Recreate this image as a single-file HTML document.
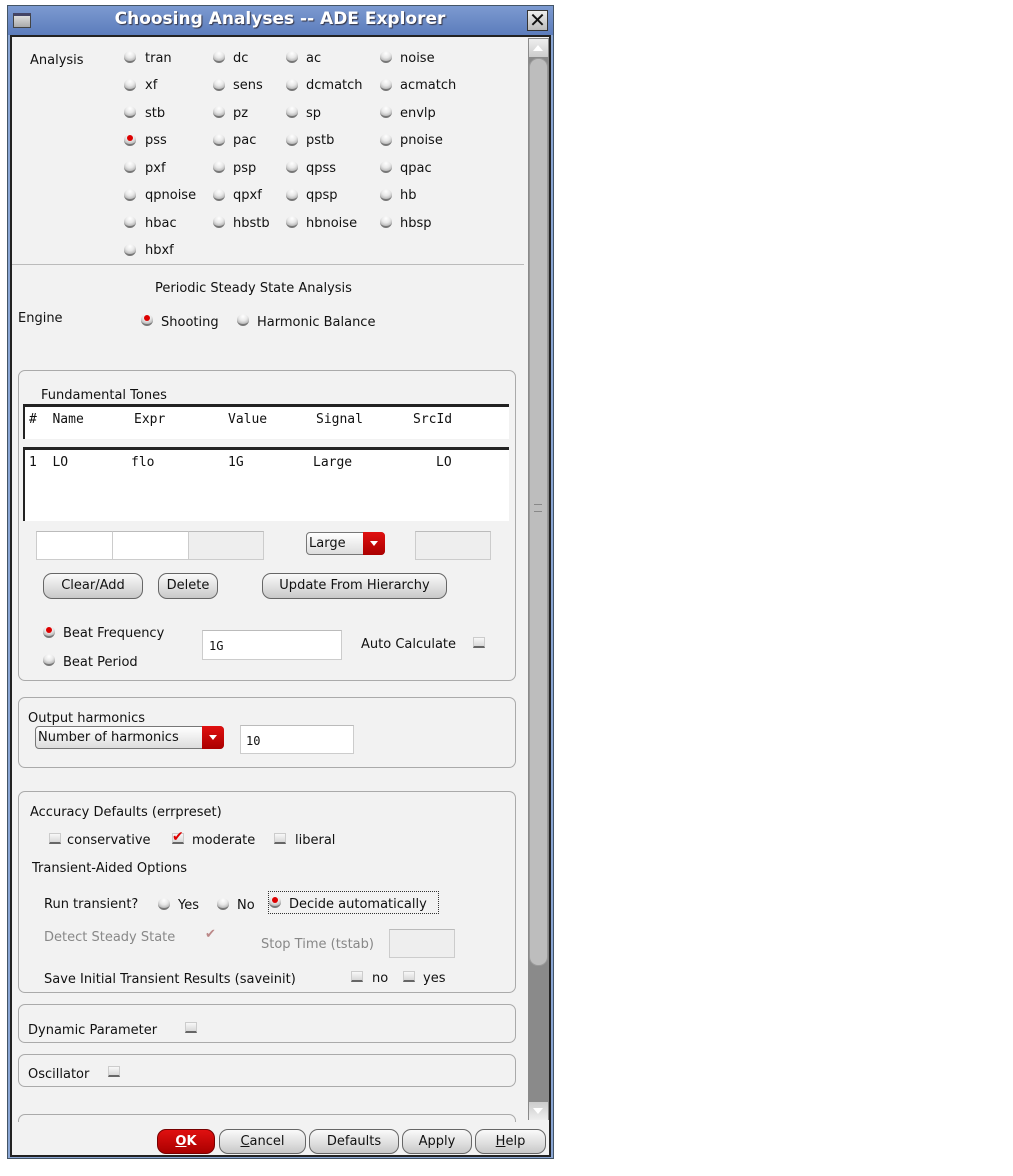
<!DOCTYPE html>
<html><head><meta charset="utf-8"><style>
*{box-sizing:border-box;margin:0;padding:0}
body{width:1013px;height:1176px;background:#fff;position:relative;overflow:hidden;font-family:"DejaVu Sans","Liberation Sans",sans-serif;font-size:13px;color:#111}
.a{position:absolute;white-space:nowrap}
.t{position:absolute;white-space:nowrap;line-height:15px;margin-top:1px}
.r{position:absolute;width:12px;height:12px;border-radius:50%;background:radial-gradient(circle at 50% 25%,#fff 0,#e8e8e8 45%,#999 100%);border-bottom:2px solid #777}
.r.on::after{content:"";position:absolute;left:3px;top:1px;width:6px;height:6px;border-radius:50%;background:#d00}
.c{position:absolute;width:12px;height:11px;background:linear-gradient(#f8f8f8,#d8d8d8);border:1px solid #ccc;border-bottom:2px solid #666}
.box{position:absolute;border:1px solid #aaa;border-radius:7px}
.btn{position:absolute;height:26px;border:1px solid #666;border-radius:9px;background:linear-gradient(#fafafa,#ddd 60%,#c8c8c8);text-align:center;line-height:24px}
.inp{position:absolute;background:#fff;border:1px solid #ccc;border-top-color:#bbb}
.g{color:#888}
.m{font-family:"DejaVu Sans Mono","Liberation Mono",monospace;font-size:13px}
.dd{position:absolute;height:23px;border:1px solid #777;border-radius:4px;background:linear-gradient(#fff,#ddd);line-height:21px;padding-left:2px}
.dd i{position:absolute;right:-1px;top:-1px;width:22px;height:23px;background:linear-gradient(#e01010,#a00);border-radius:0 4px 4px 0}
.dd i::after{content:"";position:absolute;left:7px;top:9px;border:4px solid transparent;border-top:5px solid #fff}
</style></head><body>
<div class="a" style="left:7px;top:5px;width:547px;height:1154px;background:#8aa6d4;border:1px solid #456"></div>
<div class="a" style="left:8px;top:6px;width:545px;height:29px;background:linear-gradient(#7c9ad0,#5c7dbc)"></div>
<div class="a" style="left:13px;top:13px;width:18px;height:15px;background:linear-gradient(#ddd,#aaa);border:1px solid #444;border-top:3px solid #446"></div>
<div class="a" style="left:0;top:9px;width:560px;text-align:center;color:#fff;font-weight:bold;font-size:17px;text-shadow:1px 1px 1px #334">Choosing Analyses -- ADE Explorer</div>
<div class="a" style="left:527px;top:10px;width:21px;height:21px;background:linear-gradient(#eee,#bbb);border:1px solid #333;font-size:20px;line-height:19px;text-align:center;color:#111">✕</div>
<div class="a" style="left:10px;top:35px;width:541px;height:1122px;background:#f2f2f2;border:2px solid #222"></div>
<div class="a" style="left:528px;top:38px;width:21px;height:1082px;background:#8a8a8a"></div>
<div class="a" style="left:529px;top:39px;width:19px;height:18px;background:linear-gradient(#eee,#ccc)"></div>
<div class="a" style="left:533px;top:45px;border:5px solid transparent;border-bottom:6px solid #fff;border-top:0"></div>
<div class="a" style="left:529px;top:58px;width:19px;height:908px;background:#bdbdbd;border-radius:9px;border:1px solid #999"></div>
<div class="a" style="left:534px;top:504px;width:8px;height:8px;border-top:1px solid #888;border-bottom:1px solid #888"></div>
<div class="a" style="left:529px;top:1102px;width:19px;height:18px;background:linear-gradient(#ccc,#eee)"></div>
<div class="a" style="left:533px;top:1108px;border:5px solid transparent;border-top:6px solid #fff;border-bottom:0"></div>

<div class="t" style="left:30px;top:52px">Analysis</div>
<div class="r" style="left:124px;top:51px"></div><div class="t" style="left:145px;top:50px">tran</div>
<div class="r" style="left:213px;top:51px"></div><div class="t" style="left:233px;top:50px">dc</div>
<div class="r" style="left:286px;top:51px"></div><div class="t" style="left:306px;top:50px">ac</div>
<div class="r" style="left:380px;top:51px"></div><div class="t" style="left:400px;top:50px">noise</div>
<div class="r" style="left:124px;top:79px"></div><div class="t" style="left:145px;top:77px">xf</div>
<div class="r" style="left:213px;top:79px"></div><div class="t" style="left:233px;top:77px">sens</div>
<div class="r" style="left:286px;top:79px"></div><div class="t" style="left:306px;top:77px">dcmatch</div>
<div class="r" style="left:380px;top:79px"></div><div class="t" style="left:400px;top:77px">acmatch</div>
<div class="r" style="left:124px;top:106px"></div><div class="t" style="left:145px;top:105px">stb</div>
<div class="r" style="left:213px;top:106px"></div><div class="t" style="left:233px;top:105px">pz</div>
<div class="r" style="left:286px;top:106px"></div><div class="t" style="left:306px;top:105px">sp</div>
<div class="r" style="left:380px;top:106px"></div><div class="t" style="left:400px;top:105px">envlp</div>
<div class="r on" style="left:124px;top:134px"></div><div class="t" style="left:145px;top:132px">pss</div>
<div class="r" style="left:213px;top:134px"></div><div class="t" style="left:233px;top:132px">pac</div>
<div class="r" style="left:286px;top:134px"></div><div class="t" style="left:306px;top:132px">pstb</div>
<div class="r" style="left:380px;top:134px"></div><div class="t" style="left:400px;top:132px">pnoise</div>
<div class="r" style="left:124px;top:161px"></div><div class="t" style="left:145px;top:160px">pxf</div>
<div class="r" style="left:213px;top:161px"></div><div class="t" style="left:233px;top:160px">psp</div>
<div class="r" style="left:286px;top:161px"></div><div class="t" style="left:306px;top:160px">qpss</div>
<div class="r" style="left:380px;top:161px"></div><div class="t" style="left:400px;top:160px">qpac</div>
<div class="r" style="left:124px;top:189px"></div><div class="t" style="left:145px;top:187px">qpnoise</div>
<div class="r" style="left:213px;top:189px"></div><div class="t" style="left:233px;top:187px">qpxf</div>
<div class="r" style="left:286px;top:189px"></div><div class="t" style="left:306px;top:187px">qpsp</div>
<div class="r" style="left:380px;top:189px"></div><div class="t" style="left:400px;top:187px">hb</div>
<div class="r" style="left:124px;top:216px"></div><div class="t" style="left:145px;top:215px">hbac</div>
<div class="r" style="left:213px;top:216px"></div><div class="t" style="left:233px;top:215px">hbstb</div>
<div class="r" style="left:286px;top:216px"></div><div class="t" style="left:306px;top:215px">hbnoise</div>
<div class="r" style="left:380px;top:216px"></div><div class="t" style="left:400px;top:215px">hbsp</div>
<div class="r" style="left:124px;top:244px"></div><div class="t" style="left:145px;top:242px">hbxf</div>
<div class="a" style="left:12px;top:264px;width:512px;height:1px;background:#bbb"></div>

<div class="t" style="left:155px;top:280px">Periodic Steady State Analysis</div>
<div class="t" style="left:18px;top:310px">Engine</div>
<div class="r on" style="left:141px;top:314px"></div><div class="t" style="left:161px;top:314px">Shooting</div>
<div class="r" style="left:237px;top:314px"></div><div class="t" style="left:257px;top:314px">Harmonic Balance</div>

<div class="box" style="left:18px;top:370px;width:498px;height:311px"></div>
<div class="t" style="left:41px;top:387px">Fundamental Tones</div>
<div class="a" style="left:23px;top:404px;width:486px;height:35px;background:#fff;border-top:3px solid #222;border-left:2px solid #222"></div>
<div class="t m" style="left:29px;top:411px">#&nbsp;&nbsp;Name</div>
<div class="t m" style="left:134px;top:411px">Expr</div>
<div class="t m" style="left:228px;top:411px">Value</div>
<div class="t m" style="left:316px;top:411px">Signal</div>
<div class="t m" style="left:413px;top:411px">SrcId</div>
<div class="a" style="left:23px;top:447px;width:486px;height:74px;background:#fff;border-top:3px solid #222;border-left:2px solid #222"></div>
<div class="t m" style="left:29px;top:454px">1&nbsp;&nbsp;LO</div>
<div class="t m" style="left:131px;top:454px">flo</div>
<div class="t m" style="left:228px;top:454px">1G</div>
<div class="t m" style="left:313px;top:454px">Large</div>
<div class="t m" style="left:436px;top:454px">LO</div>
<div class="inp" style="left:36px;top:531px;width:77px;height:29px"></div>
<div class="inp" style="left:112px;top:531px;width:77px;height:29px"></div>
<div class="inp" style="left:188px;top:531px;width:76px;height:29px;background:#eee"></div>
<div class="dd" style="left:306px;top:532px;width:79px">Large<i></i></div>
<div class="inp" style="left:415px;top:531px;width:76px;height:29px;background:#eee"></div>
<div class="btn" style="left:43px;top:573px;width:100px">Clear/Add</div>
<div class="btn" style="left:158px;top:573px;width:60px">Delete</div>
<div class="btn" style="left:262px;top:573px;width:185px">Update From Hierarchy</div>
<div class="r on" style="left:43px;top:626px"></div><div class="t" style="left:63px;top:625px">Beat Frequency</div>
<div class="r" style="left:43px;top:654px"></div><div class="t" style="left:63px;top:654px">Beat Period</div>
<div class="inp m" style="left:202px;top:630px;width:140px;height:30px;padding:8px 0 0 6px;font-size:12px">1G</div>
<div class="t" style="left:361px;top:636px">Auto Calculate</div>
<div class="c" style="left:473px;top:637px"></div>

<div class="box" style="left:18px;top:697px;width:498px;height:71px"></div>
<div class="t" style="left:28px;top:710px">Output harmonics</div>
<div class="dd" style="left:35px;top:726px;width:189px">Number of harmonics<i></i></div>
<div class="inp m" style="left:240px;top:725px;width:114px;height:29px;padding:8px 0 0 5px;font-size:12px">10</div>

<div class="box" style="left:18px;top:791px;width:498px;height:202px"></div>
<div class="t" style="left:30px;top:804px">Accuracy Defaults (errpreset)</div>
<div class="c" style="left:49px;top:833px"></div><div class="t" style="left:67px;top:832px">conservative</div>
<div class="c" style="left:172px;top:833px"></div><div class="a" style="left:172px;top:829px;color:#d00;font-size:14px;font-weight:bold">✔</div><div class="t" style="left:192px;top:832px">moderate</div>
<div class="c" style="left:274px;top:833px"></div><div class="t" style="left:295px;top:832px">liberal</div>
<div class="t" style="left:32px;top:860px">Transient-Aided Options</div>
<div class="t" style="left:44px;top:896px">Run transient?</div>
<div class="r" style="left:158px;top:898px"></div><div class="t" style="left:178px;top:897px">Yes</div>
<div class="r" style="left:217px;top:898px"></div><div class="t" style="left:237px;top:897px">No</div>
<div class="r on" style="left:269px;top:896px"></div>
<div class="t" style="left:268px;top:891px;width:171px;height:23px;border:1px dotted #333;padding:5px 0 0 20px;margin-top:0">Decide automatically</div>
<div class="t g" style="left:44px;top:929px">Detect Steady State</div>
<div class="a" style="left:205px;top:927px;color:#b88;font-size:13px">✔</div>
<div class="t g" style="left:261px;top:936px">Stop Time (tstab)</div>
<div class="inp" style="left:389px;top:929px;width:66px;height:29px;background:#eee"></div>
<div class="t" style="left:44px;top:971px">Save Initial Transient Results (saveinit)</div>
<div class="c" style="left:351px;top:971px"></div><div class="t" style="left:372px;top:970px">no</div>
<div class="c" style="left:403px;top:971px"></div><div class="t" style="left:423px;top:970px">yes</div>

<div class="box" style="left:18px;top:1004px;width:498px;height:39px"></div>
<div class="t" style="left:28px;top:1022px">Dynamic Parameter</div>
<div class="c" style="left:185px;top:1022px"></div>
<div class="box" style="left:18px;top:1054px;width:498px;height:33px"></div>
<div class="t" style="left:28px;top:1066px">Oscillator</div>
<div class="c" style="left:108px;top:1066px"></div>
<div class="box" style="left:18px;top:1114px;width:498px;height:20px"></div>
<div class="a" style="left:12px;top:1122px;width:514px;height:33px;background:#f2f2f2"></div>

<div class="btn" style="left:157px;top:1129px;width:58px;height:25px;background:linear-gradient(#e01010,#a00);color:#fff;font-weight:bold;border-color:#700"><u>O</u>K</div>
<div class="btn" style="left:219px;top:1129px;width:87px;height:25px"><u>C</u>ancel</div>
<div class="btn" style="left:309px;top:1129px;width:90px;height:25px">Defaults</div>
<div class="btn" style="left:402px;top:1129px;width:70px;height:25px">Apply</div>
<div class="btn" style="left:475px;top:1129px;width:71px;height:25px"><u>H</u>elp</div>
</body></html>
